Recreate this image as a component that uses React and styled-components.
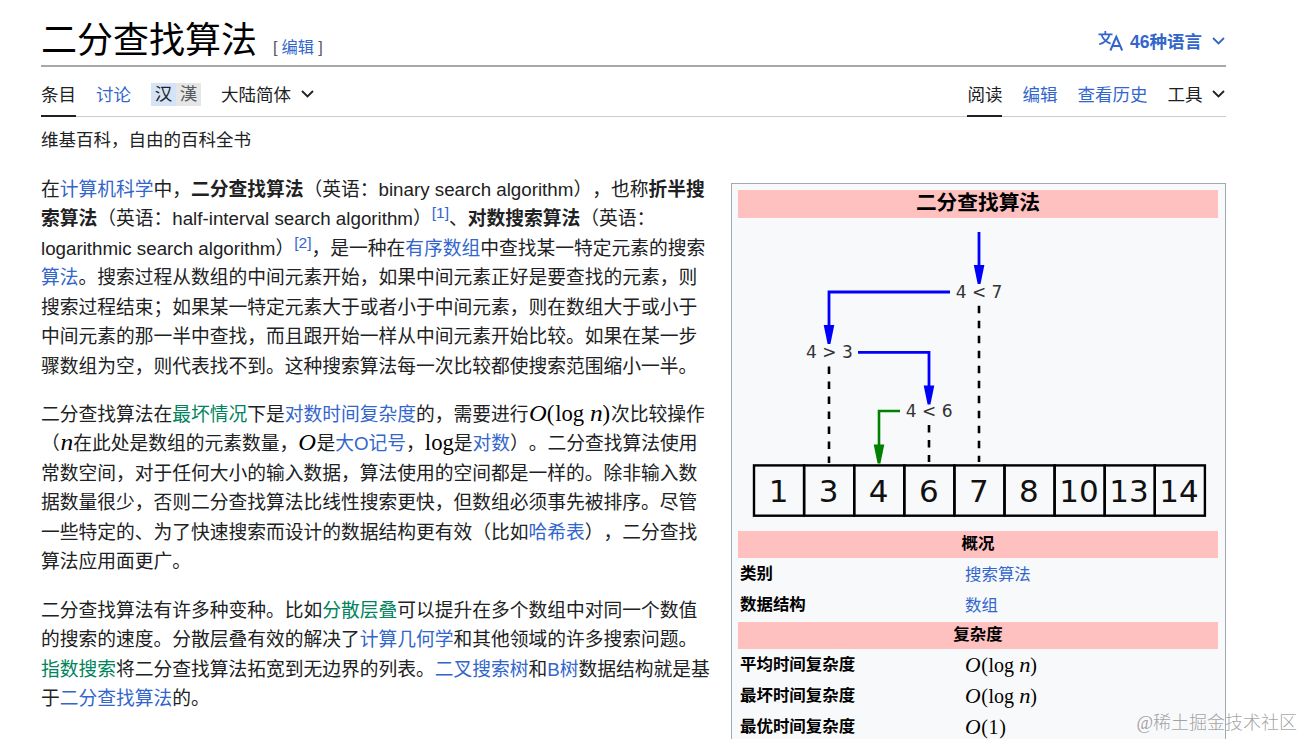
import React from 'react';
import styled, { createGlobalStyle } from 'styled-components';

const cells = [1, 3, 4, 6, 7, 8, 10, 13, 14];

const Chevron = () => (
  <ChevronIcon viewBox="0 0 13 8">
    <path d="M1 1l5.5 5.5L12 1" fill="none" stroke="currentColor" strokeWidth="1.8" />
  </ChevronIcon>
);

const LanguageIcon = () => (
  <LangSvg viewBox="0 0 26 22">
    <g fill="none" stroke="currentColor" strokeWidth="1.7">
      <path d="M0.5 4.3h14M7.3 1v3.3M11.6 4.3c-1 4.4-4.6 8.4-10.4 10M3.4 4.3c1.2 4.4 4.6 7.6 9.2 9.3" />
      <path d="M12.4 20.5L18.3 6.8l5.9 13.7M14.4 16.1h7.8" strokeWidth="2" />
    </g>
  </LangSvg>
);

const BigO = ({ arg }) => (
  <>
    <Glyph $w={0.775} $italic $stretch={1.08}>O</Glyph>
    <Glyph $w={0.4}>(</Glyph>
    {arg === 'log' ? (
      <>
        log
        <Glyph $w={0.78} $italic $right $stretch={1.12}>n</Glyph>
      </>
    ) : (
      '1'
    )}
    <Glyph $w={0.4}>)</Glyph>
  </>
);

const SearchDiagram = () => (
  <Diagram viewBox="738 218 480 313">
    <g stroke="#000" strokeWidth="2.6" strokeDasharray="7.5 7.5">
      <path d="M979 305.7V462" />
      <path d="M829 366.4V463" />
      <path d="M929 425V462" />
    </g>
    <g stroke="#00f" strokeWidth="2.8" fill="none">
      <path d="M979 232V268" />
      <path d="M950 292H829V328" />
      <path d="M858 352.4H929V388" />
    </g>
    <path d="M900 411H879V446" stroke="#008000" strokeWidth="2.6" fill="none" />
    <g fill="#00f">
      <path d="M973.8 265H984.4L980.5 284H977.7Z" />
      <path d="M823.7 325H834.3L830.4 344H827.6Z" />
      <path d="M923.7 385.5H934.3L930.4 404.5H927.6Z" />
    </g>
    <path d="M873.7 444.5H884.3L880.4 463.5H877.6Z" fill="#008000" />
    <g fontSize="17" fill="#333" textAnchor="middle">
      <text x="979" y="298">4 &lt; 7</text>
      <text x="829.4" y="358">4 &gt; 3</text>
      <text x="929.2" y="417">4 &lt; 6</text>
    </g>
    {cells.map((value, i) => (
      <g key={value}>
        <rect x={754 + i * 50.1} y="465.4" width="50.1" height="50.3" fill="none" stroke="#000" strokeWidth="2.4" />
        <text x={778.6 + i * 50.05} y="502" fontSize="31" fill="#111" textAnchor="middle">{value}</text>
      </g>
    ))}
  </Diagram>
);

const App = () => {
  return (
    <>
      <GlobalStyle />
      <Page>
        <Header>
          <Title>二分查找算法</Title>
          <EditSection>[<Link>编辑</Link>]</EditSection>
          <Languages>
            <LanguageIcon />
            <span>46种语言</span>
            <Chevron />
          </Languages>
        </Header>
        <Toolbar>
          <Tabs>
            <Tab $active>条目</Tab>
            <Tab $link>讨论</Tab>
            <Variants>
              <Variant $on>汉</Variant>
              <Variant>漢</Variant>
            </Variants>
            <Tab>大陆简体<Chevron /></Tab>
          </Tabs>
          <Tabs $end>
            <Tab $active>阅读</Tab>
            <Tab $link>编辑</Tab>
            <Tab $link>查看历史</Tab>
            <Tab>工具<Chevron /></Tab>
          </Tabs>
        </Toolbar>
        <SiteSub>维基百科，自由的百科全书</SiteSub>
        <Body>
          <Article>
            <Paragraph>
              在<Link>计算机科学</Link>中，<b>二分查找算法</b>（英语：binary search algorithm），也称<b>折半搜</b><br />
              <b>索算法</b>（英语：half-interval search algorithm）<Sup>[1]</Sup>、<b>对数搜索算法</b>（英语：<br />
              logarithmic search algorithm）<Sup>[2]</Sup>，是一种在<Link>有序数组</Link>中查找某一特定元素的搜索<br />
              <Link>算法</Link>。搜索过程从数组的中间元素开始，如果中间元素正好是要查找的元素，则<br />
              搜索过程结束；如果某一特定元素大于或者小于中间元素，则在数组大于或小于<br />
              中间元素的那一半中查找，而且跟开始一样从中间元素开始比较。如果在某一步<br />
              骤数组为空，则代表找不到。这种搜索算法每一次比较都使搜索范围缩小一半。
            </Paragraph>
            <Paragraph>
              二分查找算法在<Link $green>最坏情况</Link>下是<Link>对数时间复杂度</Link>的，需要进行<Formula><BigO arg="log" /></Formula>次比较操作<br />
              （<Formula><Glyph $w={0.6} $italic $stretch={1.12}>n</Glyph></Formula>在此处是数组的元素数量，<Formula><Glyph $w={0.8} $italic $stretch={1.08}>O</Glyph></Formula>是<Link>大O记号</Link>，<Formula>log</Formula>是<Link>对数</Link>）。二分查找算法使用<br />
              常数空间，对于任何大小的输入数据，算法使用的空间都是一样的。除非输入数<br />
              据数量很少，否则二分查找算法比线性搜索更快，但数组必须事先被排序。尽管<br />
              一些特定的、为了快速搜索而设计的数据结构更有效（比如<Link>哈希表</Link>），二分查找<br />
              算法应用面更广。
            </Paragraph>
            <Paragraph>
              二分查找算法有许多种变种。比如<Link $green>分散层叠</Link>可以提升在多个数组中对同一个数值<br />
              的搜索的速度。分散层叠有效的解决了<Link>计算几何学</Link>和其他领域的许多搜索问题。<br />
              <Link $green>指数搜索</Link>将二分查找算法拓宽到无边界的列表。<Link>二叉搜索树</Link>和<Link>B树</Link>数据结构就是基<br />
              于<Link>二分查找算法</Link>的。
            </Paragraph>
          </Article>
          <Infobox>
            <InfoHead $large>二分查找算法</InfoHead>
            <SearchDiagram />
            <InfoHead>概况</InfoHead>
            <InfoRows $pitch={30.5}>
              <Label>类别</Label>
              <Value><Link>搜索算法</Link></Value>
              <Label>数据结构</Label>
              <Value><Link>数组</Link></Value>
            </InfoRows>
            <InfoHead>复杂度</InfoHead>
            <InfoRows $pitch={31}>
              <Label>平均时间复杂度</Label>
              <Value $math><Formula $small><BigO arg="log" /></Formula></Value>
              <Label>最坏时间复杂度</Label>
              <Value $math><Formula $small><BigO arg="log" /></Formula></Value>
              <Label>最优时间复杂度</Label>
              <Value $math><Formula $small><BigO arg="1" /></Formula></Value>
            </InfoRows>
          </Infobox>
        </Body>
        <Watermark>@稀土掘金技术社区</Watermark>
      </Page>
    </>
  );
};

export default App;

const GlobalStyle = createGlobalStyle`
  * {
    box-sizing: border-box;
  }
  body {
    margin: 0;
    background: #fff;
    overflow: hidden;
  }
`;

const Page = styled.div`
  position: relative;
  width: 1303px;
  height: 739px;
  padding: 0 77px 0 41px;
  overflow: hidden;
  color: #202122;
  font-family: 'Liberation Sans', 'Noto Sans CJK SC', sans-serif;
  font-size: 17.5px;
  white-space: nowrap;
  text-spacing-trim: space-all;
`;

const Header = styled.header`
  display: flex;
  height: 67px;
  border-bottom: 2px solid #a7a9ac;
`;

const Title = styled.h1`
  margin: 15px 0 0;
  color: #000;
  font-size: 36px;
  line-height: 52px;
  font-weight: 400;
`;

const EditSection = styled.span`
  display: flex;
  gap: 4px;
  margin: 35px 0 0 16px;
  color: #54595d;
  font-size: 16.3px;
  line-height: 24px;
`;

const Link = styled.a`
  color: ${(props) => (props.$green ? '#00845c' : '#3366cc')};
`;

const Languages = styled.div`
  display: flex;
  align-items: center;
  height: 24px;
  margin: 29px 1px 0 auto;
  color: #3366cc;
  font-weight: 700;

  span {
    margin: -2px 10px 0 6px;
  }
`;

const LangSvg = styled.svg`
  width: 26px;
  height: 22px;
`;

const ChevronIcon = styled.svg`
  width: 13px;
  height: 8px;
`;

const Toolbar = styled.nav`
  display: flex;
  justify-content: space-between;
  height: 50px;
  border-bottom: 1px solid #c8ccd1;
`;

const Tabs = styled.div`
  display: flex;
  gap: 20px;
  padding-right: ${(props) => (props.$end ? '1px' : '0')};
`;

const Tab = styled.div`
  display: flex;
  align-items: center;
  gap: 9.6px;
  height: 50px;
  padding-top: 5px;
  padding-bottom: ${(props) => (props.$active ? '1px' : '3px')};
  border-bottom: ${(props) => (props.$active ? '2px solid #202122' : 'none')};
  color: ${(props) => (props.$link ? '#3366cc' : '#202122')};

  svg {
    margin-top: 2px;
  }
`;

const Variants = styled.div`
  display: flex;
  height: 23px;
  margin-top: 16px;
`;

const Variant = styled.span`
  width: 25px;
  line-height: 22px;
  text-align: center;
  color: ${(props) => (props.$on ? '#202122' : '#54595d')};
  background: ${(props) => (props.$on ? '#d4e4f6' : '#e6e6e6')};
`;

const SiteSub = styled.div`
  margin-top: 10px;
  height: 26px;
  line-height: 27px;
`;

const Body = styled.main`
  display: flex;
  justify-content: space-between;
  align-items: flex-start;
`;

const Article = styled.div`
  margin-top: 21.5px;
  font-size: 18.75px;
  line-height: 29.5px;
`;

const Paragraph = styled.p`
  margin: 0 0 18.8px;
`;

const Sup = styled.sup`
  color: #3366cc;
  font-size: 15.5px;
  line-height: 1;
`;

const Formula = styled.span`
  color: #000;
  font-family: 'Liberation Serif', serif;
  font-size: ${(props) => (props.$small ? '20px' : '22.7px')};
  line-height: 1;
`;

const Glyph = styled.span`
  display: inline-block;
  width: ${(props) => props.$w}em;
  text-align: ${(props) => (props.$right ? 'right' : 'center')};
  font-style: ${(props) => (props.$italic ? 'italic' : 'normal')};
  transform: scaleX(${(props) => props.$stretch || 1});
`;

const Infobox = styled.aside`
  width: 495px;
  height: 600px;
  margin-top: 30px;
  padding: 6px;
  border: 1px solid #a2a9b1;
  background: #f8f9fa;
  color: #000;
  font-size: 16.45px;
`;

const InfoHead = styled.div`
  width: 480px;
  height: ${(props) => (props.$large ? '28px' : '27px')};
  background: #ffc0c0;
  font-size: ${(props) => (props.$large ? '20.7px' : '16.45px')};
  line-height: ${(props) => (props.$large ? '26px' : '25px')};
  font-weight: 700;
  text-align: center;
`;

const Diagram = styled.svg`
  display: block;
  width: 480px;
  height: 313px;
  font-family: 'DejaVu Sans', sans-serif;
`;

const InfoRows = styled.div`
  display: grid;
  grid-template-columns: 225px 1fr;
  grid-auto-rows: ${(props) => props.$pitch}px;
  padding: 1px 0 2px 2px;
  line-height: 28px;
`;

const Label = styled.div`
  font-weight: 700;
`;

const Value = styled.div`
  padding-top: ${(props) => (props.$math ? '2px' : '1px')};
`;

const Watermark = styled.div`
  position: absolute;
  right: 6px;
  bottom: 3px;
  color: rgba(110, 110, 110, 0.65);
  font-family: 'Liberation Serif', 'Noto Sans CJK SC', serif;
  font-size: 18px;
  font-weight: 300;
  line-height: 26px;
`;
